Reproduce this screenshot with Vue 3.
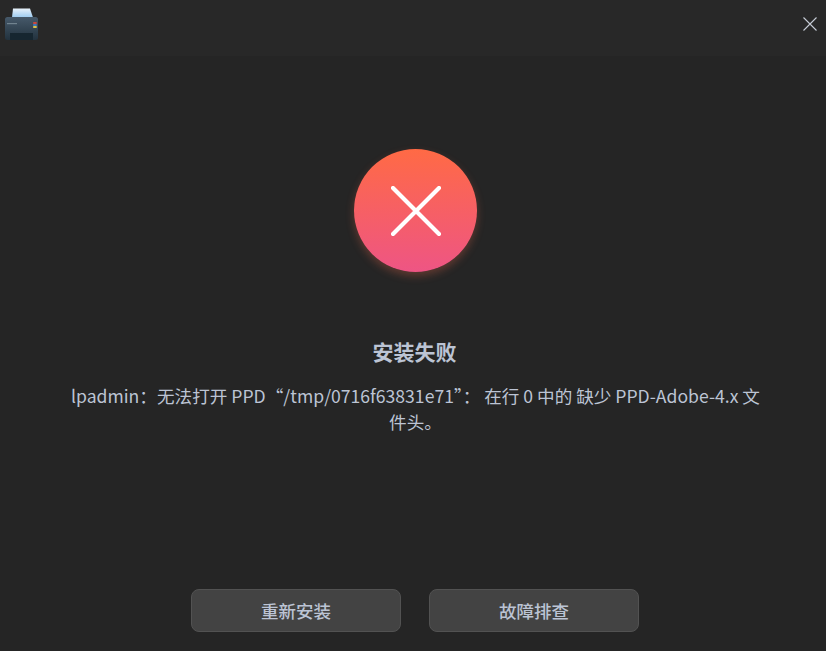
<script setup>
const title = '安装失败'
const message = 'lpadmin：无法打开 PPD“/tmp/0716f63831e71”： 在行 0 中的 缺少 PPD-Adobe-4.x 文件头。'
const actions = ['重新安装', '故障排查']
</script>

<template>
  <div class="window">
    <header class="titlebar">
      <svg class="app-icon" width="40" height="40" viewBox="0 0 40 40">
        <defs>
          <linearGradient id="paper" x1="0" y1="0" x2="0" y2="1">
            <stop offset="0" stop-color="#e8f2fb" />
            <stop offset="1" stop-color="#9ccbf0" />
          </linearGradient>
          <linearGradient id="body" x1="0" y1="0" x2="0" y2="1">
            <stop offset="0" stop-color="#46596a" />
            <stop offset="1" stop-color="#22323e" />
          </linearGradient>
        </defs>
        <path d="M13 8.5h17l3 9H12z" fill="url(#paper)" />
        <rect x="5" y="17" width="33" height="23" rx="2.5" fill="url(#body)" />
        <rect x="10" y="33" width="23" height="7" fill="#162630" />
        <rect x="7" y="23" width="10" height="1.2" fill="#71838f" />
        <rect x="33.2" y="22" width="3.5" height="2" fill="#c8483e" />
        <rect x="33.2" y="24" width="3.5" height="2" fill="#3c78b8" />
        <rect x="33.2" y="26" width="3.5" height="2" fill="#d8c04a" />
      </svg>
      <svg class="close" width="14" height="14" viewBox="0 0 14 14">
        <path d="M0.5 0.5l13 13M13.5 0.5l-13 13" stroke="#c6ccd6" stroke-width="1.1" fill="none" />
      </svg>
    </header>

    <main class="content">
      <div class="status-icon">
        <svg width="50" height="50" viewBox="0 0 50 50">
          <path d="M2 2l46 46M48 2L2 48" stroke="#fff" stroke-width="4.2" stroke-linecap="round" fill="none" />
        </svg>
      </div>
      <h1 class="title">{{ title }}</h1>
      <p class="message">{{ message }}</p>
    </main>

    <footer class="actions">
      <button v-for="action in actions" :key="action" class="btn">{{ action }}</button>
    </footer>
  </div>
</template>

<style>
html,
body {
  margin: 0;
  background: #252525;
}
</style>

<style scoped>
.window {
  width: 826px;
  height: 651px;
  display: flex;
  flex-direction: column;
  background: #252525;
  color: #bcc4d4;
  font-family: 'Noto Sans CJK SC', 'Noto Sans', sans-serif;
  overflow: hidden;
}
.titlebar {
  height: 56px;
  flex: none;
  display: flex;
  justify-content: space-between;
  background: #282828;
}
.close {
  margin: 17px 9px 0 0;
}
.content {
  flex: 1;
  display: flex;
  flex-direction: column;
  align-items: center;
  padding: 93px 0 0 5px;
}
.status-icon {
  width: 123px;
  height: 123px;
  border-radius: 50%;
  display: flex;
  align-items: center;
  justify-content: center;
  background: linear-gradient(180deg, #ff6a45 0%, #ee5584 100%);
  box-shadow: 0 4px 8px rgba(255, 110, 80, 0.28);
}
.title {
  margin: 64px 2px 0 0;
  font-size: 21px;
  line-height: 30px;
  font-weight: 700;
}
.message {
  width: 700px;
  margin: 17px 0 0;
  font-size: 17.6px;
  line-height: 26px;
  text-align: center;
}
.actions {
  flex: none;
  display: flex;
  justify-content: center;
  gap: 28px;
  padding: 0 0 19px 4px;
}
.btn {
  width: 210px;
  height: 43px;
  box-sizing: border-box;
  border: 1px solid #525252;
  border-radius: 8px;
  background: #434343;
  color: #bcc4d4;
  font-family: inherit;
  font-size: 17.5px;
  font-weight: 500;
}
</style>
